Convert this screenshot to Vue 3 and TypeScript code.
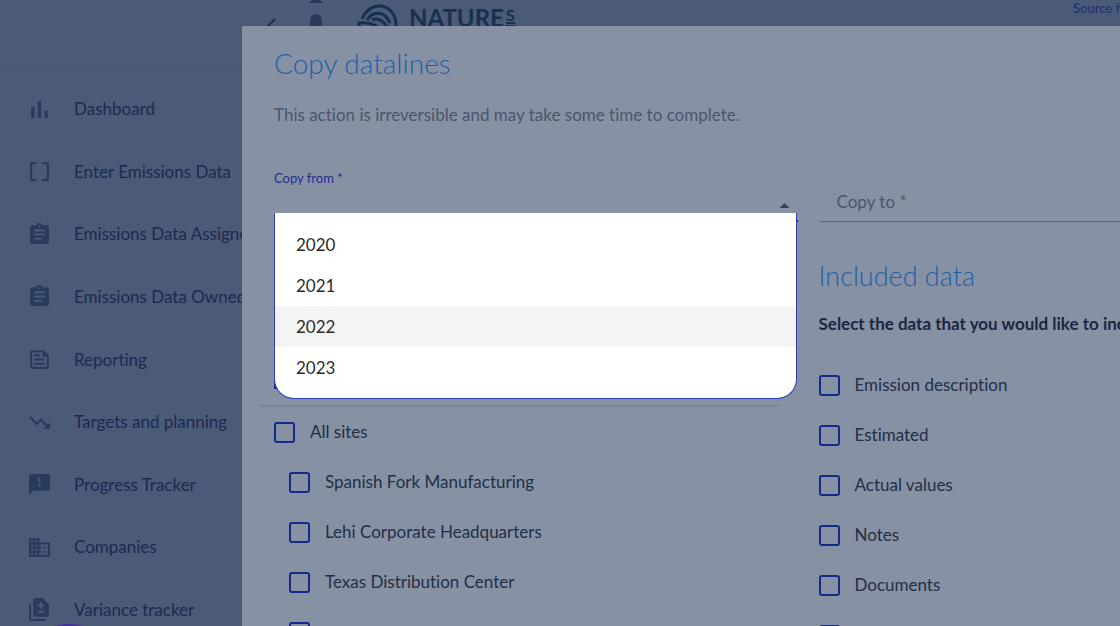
<script setup lang="ts">
import { ref } from 'vue'

interface NavItem {
  label: string
  path: string
}

interface Choice {
  label: string
  checked: boolean
}

const navItems: NavItem[] = [
  { label: 'Dashboard', path: 'M4 9h3.2v11H4zM10.4 4h3.2v16h-3.2zM16.8 13H20v7h-3.2z' },
  { label: 'Enter Emissions Data', path: 'M3 3h6v2H5v14h4v2H3zM15 3h6v18h-6v-2h4V5h-4z' },
  {
    label: 'Emissions Data Assigned',
    path: 'M19 3h-4.18C14.4 1.84 13.3 1 12 1c-1.3 0-2.4.84-2.82 2H5c-1.1 0-2 .9-2 2v14c0 1.1.9 2 2 2h14c1.1 0 2-.9 2-2V5c0-1.1-.9-2-2-2zm-7 0c.55 0 1 .45 1 1s-.45 1-1 1-1-.45-1-1 .45-1 1-1zm2 14H7v-2h7v2zm3-4H7v-2h10v2zm0-4H7V7h10v2z',
  },
  {
    label: 'Emissions Data Owned',
    path: 'M19 3h-4.18C14.4 1.84 13.3 1 12 1c-1.3 0-2.4.84-2.82 2H5c-1.1 0-2 .9-2 2v14c0 1.1.9 2 2 2h14c1.1 0 2-.9 2-2V5c0-1.1-.9-2-2-2zm-7 0c.55 0 1 .45 1 1s-.45 1-1 1-1-.45-1-1 .45-1 1-1zm2 14H7v-2h7v2zm3-4H7v-2h10v2zm0-4H7V7h10v2z',
  },
  {
    label: 'Reporting',
    path: 'M16 3H5c-1.1 0-2 .9-2 2v14c0 1.1.9 2 2 2h14c1.1 0 2-.9 2-2V8l-5-5zM19 19H5V5h10v4h4v10zM7 17h10v-2H7v2zm5-10H7v2h5V7zm-5 6h10v-2H7v2z',
  },
  {
    label: 'Targets and planning',
    path: 'M16 18l2.29-2.29-4.88-4.88-4 4L2 7.41 3.41 6l6 6 4-4 6.3 6.29L22 12v6z',
  },
  {
    label: 'Progress Tracker',
    path: 'M20 2H4c-1.1 0-1.99.9-1.99 2L2 22l4-4h14c1.1 0 2-.9 2-2V4c0-1.1-.9-2-2-2zm-7 12h-2v-2h2v2zm0-4h-2V5h2v5z',
  },
  {
    label: 'Companies',
    path: 'M12 7V3H2v18h20V7H12zM6 19H4v-2h2v2zm0-4H4v-2h2v2zm0-4H4V9h2v2zm0-4H4V5h2v2zm4 12H8v-2h2v2zm0-4H8v-2h2v2zm0-4H8V9h2v2zm0-4H8V5h2v2zm10 12h-8v-2h2v-2h-2v-2h2v-2h-2V9h8v10zm-2-8h-2v2h2v-2zm0 4h-2v2h2v-2z',
  },
  {
    label: 'Variance tracker',
    path: 'M4 7H2v14c0 1.1.9 2 2 2h14v-2H4V7zM15 1H8c-1.1 0-2 .9-2 2v14c0 1.1.9 2 2 2h11c1.1 0 2-.9 2-2V7l-6-6zm1.5 14h-6v-2h6v2zm0-6h-2v2h-2V9h-2V7h2V5h2v2h2v2z',
  },
]

const years = ['2020', '2021', '2022', '2023']
const activeYear = ref('2022')
const copyFrom = ref('')
const copyTo = ref('')

const allSites = ref(false)
const sites = ref<Choice[]>([
  { label: 'Spanish Fork Manufacturing', checked: false },
  { label: 'Lehi Corporate Headquarters', checked: false },
  { label: 'Texas Distribution Center', checked: false },
  { label: '', checked: false },
])
const fields = ref<Choice[]>([
  { label: 'Emission description', checked: false },
  { label: 'Estimated', checked: false },
  { label: 'Actual values', checked: false },
  { label: 'Notes', checked: false },
  { label: 'Documents', checked: false },
  { label: '', checked: false },
])
</script>

<template>
  <div class="page">
    <aside class="sidebar">
      <div class="sidebar-head"></div>
      <nav>
        <a v-for="item in navItems" :key="item.label" href="#" class="nav-item">
          <svg viewBox="0 0 24 24" aria-hidden="true"><path :d="item.path" fill-rule="evenodd" /></svg>
          <span>{{ item.label }}</span>
        </a>
      </nav>
      <div class="bubble"></div>
    </aside>

    <header class="topbar">
      <button class="back" aria-label="Back">
        <svg viewBox="0 0 12 20"><path d="M10 3L2 11l8 8" /></svg>
      </button>
      <svg class="figure" viewBox="0 0 14 40" aria-hidden="true">
        <path d="M0 3L5 -2h4l5 5z" />
        <rect x="1" y="14" width="12" height="26" rx="6" />
      </svg>
      <div class="brand">
        <svg viewBox="0 0 42 30" aria-hidden="true">
          <path d="M5 15C8 7 15 2 22 2c10 0 17 8 17 19v6" />
          <path d="M10 16C16 6 28 7 33 19" />
          <path d="M15 16C20 13 29 17 32 28" />
          <path d="M2 28v-9c10-1 19 2 25 10" />
          <path d="M2 23c6 0 11 2 15 6" />
        </svg>
        <span class="brand-name">NATURE<span class="brand-s">S</span></span>
      </div>
      <span class="source">Source f</span>
    </header>

    <section class="dialog" role="dialog" aria-modal="true" aria-labelledby="dialog-title">
      <h1 id="dialog-title">Copy datalines</h1>
      <p class="intro">This action is irreversible and may take some time to complete.</p>

      <div class="columns">
        <div class="column">
          <div class="field">
            <label class="field-label" for="copy-from">Copy from *</label>
            <div class="select-wrap">
              <select id="copy-from" v-model="copyFrom" class="select focused">
                <option value=""></option>
                <option v-for="year in years" :key="year" :value="year">{{ year }}</option>
              </select>
              <svg class="caret" viewBox="0 0 10 5" aria-hidden="true"><path d="M0 5l5-5 5 5z" /></svg>
            </div>
            <ul class="menu" role="listbox" aria-label="Copy from">
              <li
                v-for="year in years"
                :key="year"
                role="option"
                :aria-selected="year === copyFrom"
                :class="{ active: year === activeYear }"
                @mouseenter="activeYear = year"
                @click="copyFrom = year"
              >{{ year }}</li>
            </ul>
          </div>

          <div class="tree-head"></div>
          <div class="tree">
            <label class="check"><input v-model="allSites" type="checkbox" /><span>All sites</span></label>
            <label v-for="(site, i) in sites" :key="i" class="check nested">
              <input v-model="site.checked" type="checkbox" /><span>{{ site.label }}</span>
            </label>
          </div>
        </div>

        <div class="column">
          <select v-model="copyTo" class="select resting" aria-label="Copy to">
            <option value="">Copy to *</option>
            <option v-for="year in years" :key="year" :value="year">{{ year }}</option>
          </select>
          <h2>Included data</h2>
          <p class="hint">Select the data that you would like to include</p>
          <label v-for="(field, i) in fields" :key="i" class="check">
            <input v-model="field.checked" type="checkbox" /><span>{{ field.label }}</span>
          </label>
        </div>
      </div>
    </section>

    <div class="pointer" aria-hidden="true"></div>
  </div>
</template>

<style>
body {
  margin: 0;
  overflow: hidden;
}
</style>

<style scoped>
* {
  box-sizing: border-box;
}
.page {
  position: relative;
  display: flex;
  height: 100vh;
  overflow: hidden;
  background: #4b5a76;
  color: #1b2b50;
  font-family: Lato, "Liberation Sans", sans-serif;
  font-size: 17px;
  font-variant-ligatures: none;
  line-height: 24px;
}
.sidebar {
  position: relative;
  display: flex;
  flex-direction: column;
  flex: none;
  width: 242px;
  height: calc(100vh + 15px);
}
.sidebar-head {
  flex: none;
  height: 68px;
  margin-bottom: 10px;
  border-bottom: 1px solid #465574;
}
nav {
  display: flex;
  flex: 1;
  flex-direction: column;
}
.nav-item {
  display: flex;
  flex: 1;
  align-items: center;
  gap: 22px;
  padding-left: 27px;
  color: #1b2b50;
  white-space: nowrap;
  text-decoration: none;
}
.nav-item svg {
  flex: none;
  width: 25px;
  height: 25px;
  fill: #293a5c;
}
.bubble {
  position: absolute;
  left: 19px;
  bottom: -83px;
  width: 100px;
  height: 100px;
  border-radius: 50%;
  background: #4331a0;
}
.topbar {
  display: flex;
  flex: 1;
  align-items: flex-start;
  height: 68px;
}
.back {
  width: 12px;
  margin: 16px 0 0 23px;
  padding: 0;
  border: 0;
  background: none;
}
.back svg {
  display: block;
  width: 12px;
  height: 20px;
  fill: none;
  stroke: #1d3052;
  stroke-width: 2;
}
.figure {
  width: 14px;
  height: 40px;
  margin-left: 32px;
  fill: #293a5c;
}
.brand {
  display: flex;
  gap: 10px;
  margin-left: 34px;
  color: #17304f;
}
.brand svg {
  width: 42px;
  height: 30px;
  margin-top: 4px;
  fill: none;
  stroke: #17304f;
  stroke-width: 3;
}
.brand-name {
  margin-top: 6px;
  font-size: 24px;
  font-weight: 700;
  line-height: 24px;
}
.brand-s {
  display: inline-block;
  height: 21px;
  margin-left: 2px;
  border-bottom: 5px double #17304f;
  font-size: 16px;
  line-height: 18px;
  vertical-align: top;
}
.source {
  margin-left: auto;
  color: #1c2f74;
  font-size: 13px;
  line-height: 16px;
}
.dialog {
  position: absolute;
  top: 26px;
  right: -254px;
  bottom: 0;
  left: 242px;
  padding: 19px 32px 0;
  overflow: hidden;
  background: #8791a4;
  color: #222f47;
}
h1,
h2 {
  margin: 0;
  color: #2160a6;
  font-size: 28px;
  font-weight: 300;
  line-height: 36px;
}
.intro {
  margin: 22px 0 0;
  color: #4b566b;
  line-height: 24px;
}
.columns {
  display: grid;
  grid-template-columns: 1fr 1fr;
  gap: 21px;
  margin-top: 43px;
}
.field {
  position: relative;
}
.field-label {
  display: block;
  color: #1c2f8c;
  font-size: 13px;
  line-height: 16px;
}
.select-wrap {
  position: relative;
}
.select {
  display: block;
  width: 100%;
  height: 36px;
  margin: 0;
  padding: 0 18px;
  border: 0;
  border-radius: 0;
  outline: 0;
  appearance: none;
  background: none;
  color: #4b566b;
  font: inherit;
}
.focused {
  border-bottom: 2px solid #14268a;
}
.caret {
  position: absolute;
  top: 17px;
  right: 8px;
  width: 11px;
  height: 5px;
  fill: #37435a;
}
.menu {
  position: absolute;
  z-index: 1;
  top: 43px;
  right: 1px;
  left: 0;
  margin: 0;
  padding: 11px 0 10px;
  border: 1px solid #2e3fb0;
  border-top: 0;
  border-radius: 0 0 20px 20px;
  background: #fff;
  color: #2b2b2b;
  list-style: none;
}
.menu li {
  padding: 0 21px;
  line-height: 41px;
}
.menu li.active {
  background: #f4f4f4;
}
.tree-head {
  width: 21px;
  height: 10px;
  margin-top: 157px;
  background: #14268a;
}
.tree {
  margin: 16px 20px 0 -14px;
  padding-left: 14px;
  border-top: 2px solid #7a8498;
}
.check {
  display: flex;
  align-items: center;
  gap: 15px;
  height: 50px;
}
.nested {
  padding-left: 15px;
}
.check input {
  flex: none;
  width: 21px;
  height: 21px;
  margin: 0;
  border: 2px solid #142a86;
  border-radius: 3px;
  appearance: none;
}
.resting {
  height: 44px;
  margin-top: 8px;
  padding-top: 4px;
  border-bottom: 1px solid #5a657b;
}
h2 {
  margin-top: 36px;
  font-size: 27px;
}
.hint {
  margin: 18px 0 24px;
  color: #1b2740;
  font-weight: 700;
  line-height: 24px;
  white-space: nowrap;
}
.pointer {
  position: absolute;
  top: 277px;
  left: 443px;
  width: 72px;
  height: 72px;
  border: 3px solid #f9ac6c;
  border-radius: 50%;
  background: rgba(249, 172, 108, 0.5);
  pointer-events: none;
}
</style>
